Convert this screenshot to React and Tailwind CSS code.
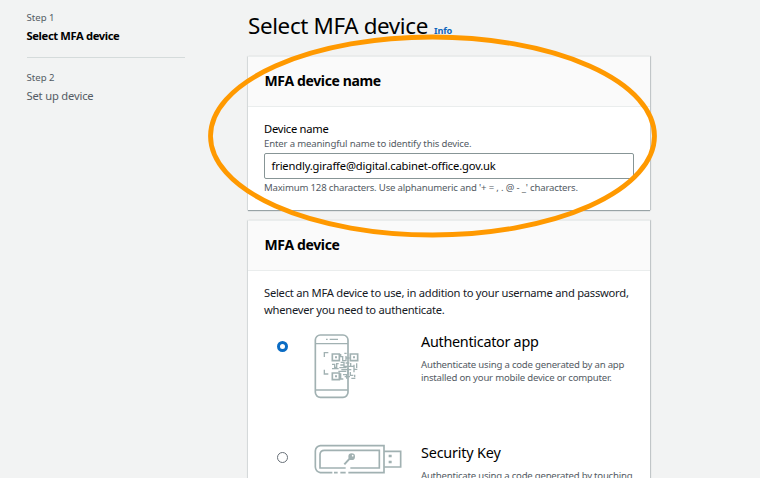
function PhoneIcon() {
  return (
    <svg width="52" height="68" viewBox="0 0 156 204" fill="none" stroke="#a1b1b2" strokeWidth="5">
      <rect x="16" y="9" width="98" height="187" rx="15" />
      <path d="M16 35H114M16 174H114M48 22H53M59 22H84" strokeWidth="4" />
      <path d="M55 62H43V75M43 113V126H55" strokeWidth="4" />
      <path d="M67 66H88V86H67ZM121 66H143V86H121ZM67 123H88V143H67Z" strokeWidth="5" />
      <path d="M75 76H81M129 76H135M75 133H81" strokeWidth="6" />
      <path
        d="M92 66V74H98V86H108V72M103 64H110M108 78H119M66 97H74V106H82M66 110H86M86 95H80V104M92 91H102V99H91M107 93H118M122 93V103H133M140 94V108M130 112H142M132 98V121M88 107H110M94 113H124M100 103H122M85 118H109M114 108V128M92 124V141H100M99 128H110V140M104 134H120M121 120V130H130M124 139H136M134 128V136"
        strokeWidth="4"
      />
    </svg>
  );
}

function SecurityKeyIcon() {
  return (
    <svg width="90" height="34" viewBox="0 0 270 102" fill="none" stroke="#a1b1b2" strokeWidth="5">
      <path d="M58 89H22Q8 86 7 72V24Q8 10 22 8H213V89H106M63 89H74M82 89H98" />
      <path d="M98 75H21V34Q22 22 34 22H199V75H112" />
      <path d="M213 25H263V72H213" />
      <path d="M227 39H236M227 57H236" strokeWidth="8" />
      <path d="M94 64L110 47" strokeWidth="6" />
      <circle cx="116" cy="41" r="10" fill="#a1b1b2" stroke="none" />
      <circle cx="119" cy="38" r="2.5" fill="#fff" stroke="none" />
    </svg>
  );
}

function Step({ label, children }) {
  return (
    <div>
      <div className="h-[14px] text-[9.6px] leading-[14px] text-[#545b64]">{label}</div>
      {children}
    </div>
  );
}

function Card({ title, className, children }) {
  return (
    <section className={`w-[402px] bg-white shadow-[0_1px_1px_0_rgba(0,28,36,0.35),1px_0_1px_0_rgba(0,28,36,0.15),-1px_0_1px_0_rgba(0,28,36,0.06)] ${className}`}>
      <h2 className="flex h-[51px] items-center border-t border-b border-[#eaeded] bg-[#fafafa] pr-4 pb-[2px] pl-[16.5px] text-[14px] leading-5 font-bold tracking-[-0.36px] text-black">
        {title}
      </h2>
      {children}
    </section>
  );
}

export default function App() {
  return (
    <main className="relative flex h-[478px] w-[760px] overflow-hidden bg-[#f2f3f3] font-['Noto_Sans',sans-serif] whitespace-nowrap text-[#16191f]">
      <nav className="ml-[26.5px] w-[158.5px] shrink-0 pt-[11px]">
        <div className="border-b border-[#d5dbdb] pb-[12px]">
          <Step label="Step 1">
            <div className="mt-[2px] text-[11.2px] leading-[18px] font-bold tracking-[-0.37px] text-black">Select MFA device</div>
          </Step>
        </div>
        <div className="pt-[13px]">
          <Step label="Step 2">
            <div className="mt-[2px] text-[11.2px] leading-[18px] tracking-[-0.18px] text-[#545b64]">Set up device</div>
          </Step>
        </div>
      </nav>

      <div className="ml-[63px] shrink-0 pt-[12px]">
        <div className="flex h-[44px] items-start">
          <h1 className="text-[22.4px] leading-[28px] tracking-[-0.36px] text-black">Select MFA device</h1>
          <a className="mt-[12px] ml-[6px] text-[9.2px] leading-[14px] font-bold tracking-[-0.15px] text-[#1166bb]">Info</a>
        </div>

        <Card title="MFA device name" className="h-[154px]">
          <div className="px-4 pt-[13px]">
            <div className="text-[11.2px] leading-[17px] tracking-[-0.26px] text-black">Device name</div>
            <div className="text-[9.6px] leading-[13px] tracking-[-0.156px] text-[#545b64]">Enter a meaningful name to identify this device.</div>
            <div className="mt-[3px] h-[26px] w-[370px] rounded-[2px] border border-[#879596] bg-white px-[6.5px] text-[11.2px] leading-[24px] tracking-[-0.165px] text-black">
              friendly.giraffe@digital.cabinet-office.gov.uk
            </div>
            <div className="mt-[2px] text-[9.6px] leading-[14px] tracking-[-0.18px] text-[#545b64]">
              Maximum 128 characters. Use alphanumeric and '+ = , . @ - _' characters.
            </div>
          </div>
        </Card>

        <Card title="MFA device" className="mt-[10px] h-[300px]">
          <div className="px-4 pt-[13px]">
            <p className="text-[11.2px] leading-[17px] tracking-[-0.255px]">
              Select an MFA device to use, in addition to your username and password,
              <br />
              whenever you need to authenticate.
            </p>
            <div className="mt-[14px] flex h-[111px]">
              <div className="mt-[9px] ml-[13px] h-[11px] w-[11px] shrink-0 rounded-full border-[3.5px] border-[#0a6cc4] bg-white" />
              <div className="ml-[22px] w-[111px] shrink-0">
                <PhoneIcon />
              </div>
              <div>
                <h3 className="text-[14.4px] leading-[20px] tracking-[-0.29px] text-black">Authenticator app</h3>
                <p className="mt-[7px] text-[9.6px] leading-[12.8px] tracking-[-0.21px] text-[#545b64]">
                  Authenticate using a code generated by an app
                  <br />
                  installed on your mobile device or computer.
                </p>
              </div>
            </div>
            <div className="flex">
              <div className="mt-[9px] ml-[13px] h-[11px] w-[11px] shrink-0 rounded-full border border-[#687078] bg-white" />
              <div className="ml-[22px] w-[111px] shrink-0 pl-[3px]">
                <SecurityKeyIcon />
              </div>
              <div>
                <h3 className="text-[14.4px] leading-[20px] tracking-[-0.19px] text-black">Security Key</h3>
                <p className="mt-[7px] text-[9.6px] leading-[12.8px] tracking-[-0.22px] text-[#545b64]">Authenticate using a code generated by touching</p>
              </div>
            </div>
          </div>
        </Card>
      </div>

      <svg className="pointer-events-none absolute inset-0" width="760" height="478" fill="none">
        <ellipse cx="432.5" cy="136" rx="222" ry="99" stroke="#ff9900" strokeWidth="4.8" />
      </svg>
    </main>
  );
}
